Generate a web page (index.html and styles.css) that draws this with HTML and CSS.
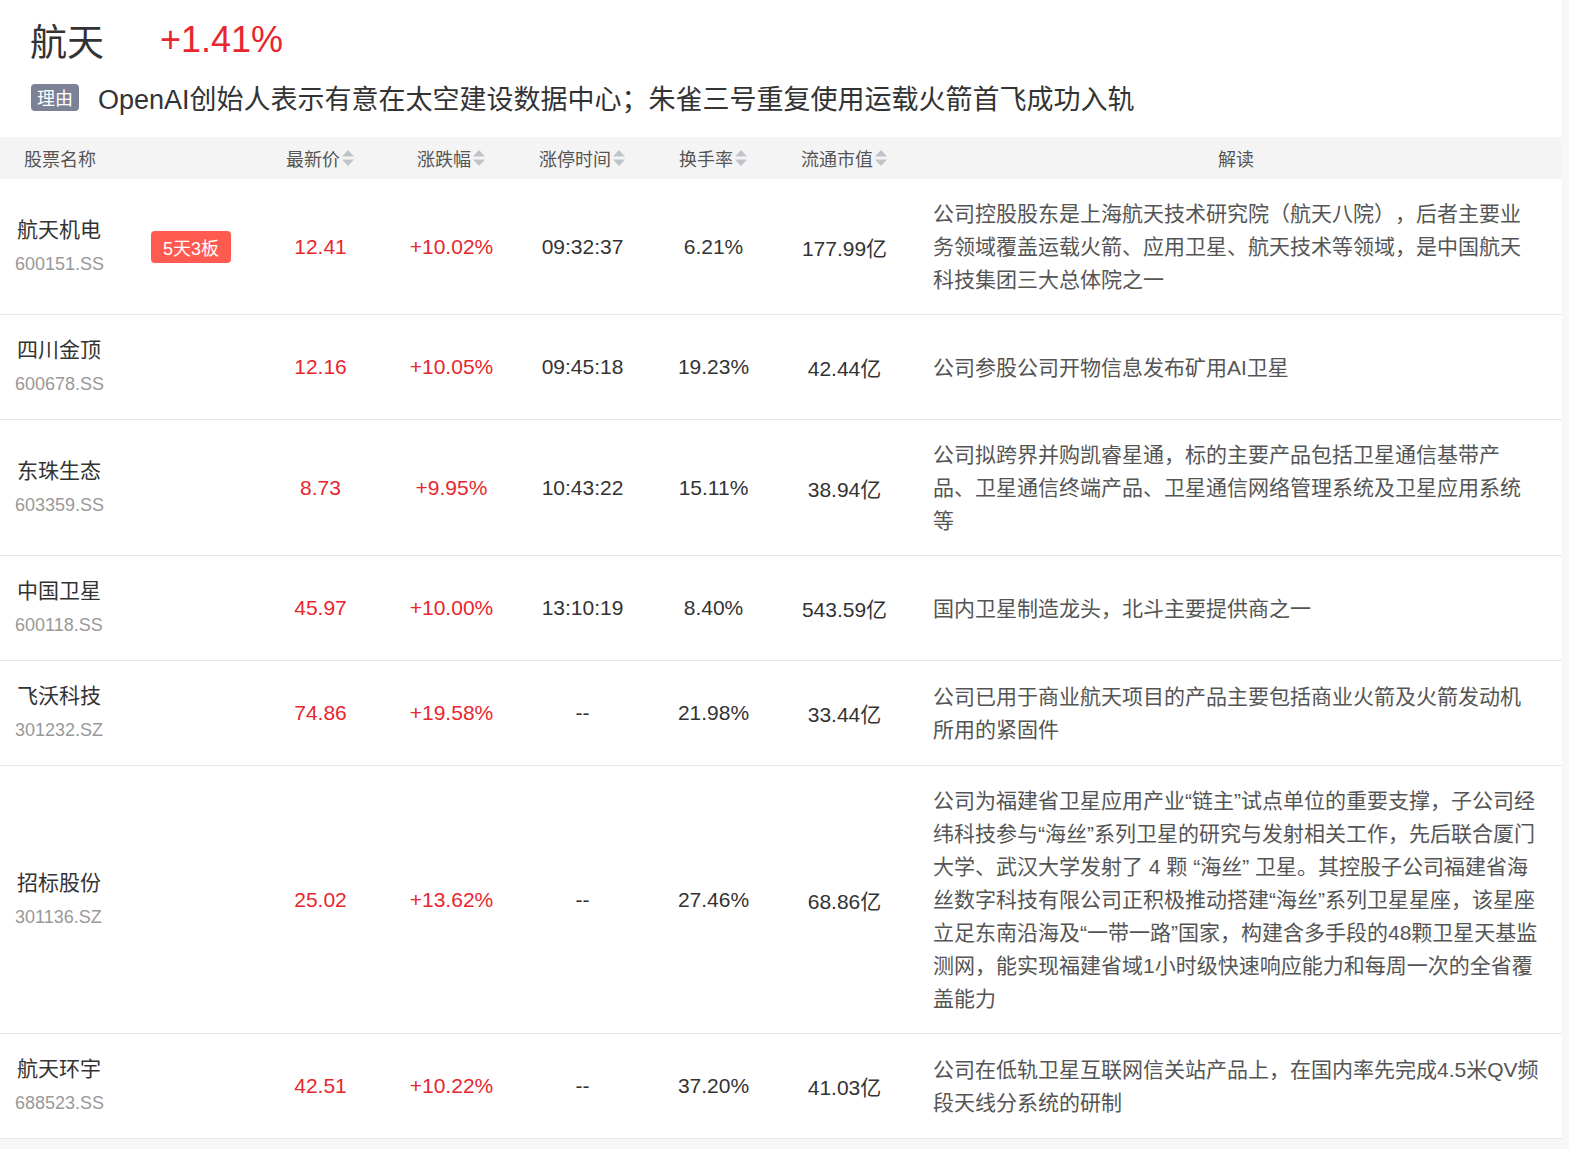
FILE: index.html
```html
<!DOCTYPE html>
<html lang="zh-CN">
<head>
<meta charset="utf-8">
<title>航天</title>
<link rel="stylesheet" href="styles.css">
</head>
<body>
<div class="page">
  <div class="top">
    <div class="title-line">
      <span class="title">航天</span>
      <span class="pct">+1.41%</span>
    </div>
    <div class="reason">
      <span class="reason-tag">理由</span>
      <span class="reason-text">OpenAI创始人表示有意在太空建设数据中心；朱雀三号重复使用运载火箭首飞成功入轨</span>
    </div>
  </div>

  <div class="table">
    <div class="row head">
      <div class="hcell left">股票名称</div>
      <div class="hcell">最新价<svg class="sort" viewBox="0 0 14 20" width="14" height="20"><path d="M7 2L13 8.5H1Z"/><path d="M1 11.5H13L7 18Z"/></svg></div>
      <div class="hcell">涨跌幅<svg class="sort" viewBox="0 0 14 20" width="14" height="20"><path d="M7 2L13 8.5H1Z"/><path d="M1 11.5H13L7 18Z"/></svg></div>
      <div class="hcell">涨停时间<svg class="sort" viewBox="0 0 14 20" width="14" height="20"><path d="M7 2L13 8.5H1Z"/><path d="M1 11.5H13L7 18Z"/></svg></div>
      <div class="hcell">换手率<svg class="sort" viewBox="0 0 14 20" width="14" height="20"><path d="M7 2L13 8.5H1Z"/><path d="M1 11.5H13L7 18Z"/></svg></div>
      <div class="hcell">流通市值<svg class="sort" viewBox="0 0 14 20" width="14" height="20"><path d="M7 2L13 8.5H1Z"/><path d="M1 11.5H13L7 18Z"/></svg></div>
      <div class="hcell">解读</div>
    </div>

    <div class="row">
      <div class="name-cell">
        <div class="stock"><div class="sname">航天机电</div><div class="scode">600151.SS</div></div>
        <span class="board">5天3板</span>
      </div>
      <div class="cell red">12.41</div>
      <div class="cell red">+10.02%</div>
      <div class="cell">09:32:37</div>
      <div class="cell">6.21%</div>
      <div class="cell">177.99亿</div>
      <div class="desc">公司控股股东是上海航天技术研究院（航天八院），后者主要业务领域覆盖运载火箭、应用卫星、航天技术等领域，是中国航天科技集团三大总体院之一</div>
    </div>

    <div class="row">
      <div class="name-cell">
        <div class="stock"><div class="sname">四川金顶</div><div class="scode">600678.SS</div></div>
      </div>
      <div class="cell red">12.16</div>
      <div class="cell red">+10.05%</div>
      <div class="cell">09:45:18</div>
      <div class="cell">19.23%</div>
      <div class="cell">42.44亿</div>
      <div class="desc">公司参股公司开物信息发布矿用AI卫星</div>
    </div>

    <div class="row">
      <div class="name-cell">
        <div class="stock"><div class="sname">东珠生态</div><div class="scode">603359.SS</div></div>
      </div>
      <div class="cell red">8.73</div>
      <div class="cell red">+9.95%</div>
      <div class="cell">10:43:22</div>
      <div class="cell">15.11%</div>
      <div class="cell">38.94亿</div>
      <div class="desc">公司拟跨界并购凯睿星通，标的主要产品包括卫星通信基带产品、卫星通信终端产品、卫星通信网络管理系统及卫星应用系统等</div>
    </div>

    <div class="row">
      <div class="name-cell">
        <div class="stock"><div class="sname">中国卫星</div><div class="scode">600118.SS</div></div>
      </div>
      <div class="cell red">45.97</div>
      <div class="cell red">+10.00%</div>
      <div class="cell">13:10:19</div>
      <div class="cell">8.40%</div>
      <div class="cell">543.59亿</div>
      <div class="desc">国内卫星制造龙头，北斗主要提供商之一</div>
    </div>

    <div class="row">
      <div class="name-cell">
        <div class="stock"><div class="sname">飞沃科技</div><div class="scode">301232.SZ</div></div>
      </div>
      <div class="cell red">74.86</div>
      <div class="cell red">+19.58%</div>
      <div class="cell">--</div>
      <div class="cell">21.98%</div>
      <div class="cell">33.44亿</div>
      <div class="desc">公司已用于商业航天项目的产品主要包括商业火箭及火箭发动机所用的紧固件</div>
    </div>

    <div class="row">
      <div class="name-cell">
        <div class="stock"><div class="sname">招标股份</div><div class="scode">301136.SZ</div></div>
      </div>
      <div class="cell red">25.02</div>
      <div class="cell red">+13.62%</div>
      <div class="cell">--</div>
      <div class="cell">27.46%</div>
      <div class="cell">68.86亿</div>
      <div class="desc">公司为福建省卫星应用产业“链主”试点单位的重要支撑，子公司经纬科技参与“海丝”系列卫星的研究与发射相关工作，先后联合厦门大学、武汉大学发射了 4 颗 “海丝” 卫星。其控股子公司福建省海丝数字科技有限公司正积极推动搭建“海丝”系列卫星星座，该星座立足东南沿海及“一带一路”国家，构建含多手段的48颗卫星天基监测网，能实现福建省域1小时级快速响应能力和每周一次的全省覆盖能力</div>
    </div>

    <div class="row">
      <div class="name-cell">
        <div class="stock"><div class="sname">航天环宇</div><div class="scode">688523.SS</div></div>
      </div>
      <div class="cell red">42.51</div>
      <div class="cell red">+10.22%</div>
      <div class="cell">--</div>
      <div class="cell">37.20%</div>
      <div class="cell">41.03亿</div>
      <div class="desc">公司在低轨卫星互联网信关站产品上，在国内率先完成4.5米QV频段天线分系统的研制</div>
    </div>
  </div>
</div>
</body>
</html>
```

FILE: styles.css
```css
html, body {
  margin: 0;
  padding: 0;
}
body {
  background: #f6f7f9;
  font-family: "Liberation Sans", "Noto Sans CJK SC", Arial, sans-serif;
  color: #333;
  text-spacing-trim: space-all;
}
.page {
  width: 1562px;
  background: #fff;
}
.top {
  padding: 18px 0 22px 30px;
}
.title-line {
  display: flex;
  align-items: center;
  height: 44px;
}
.title {
  font-size: 37px;
  color: #333;
}
.pct {
  font-size: 36px;
  color: #e8262d;
  margin-left: 56px;
}
.reason {
  display: flex;
  align-items: center;
  height: 36px;
  margin-top: 17px;
}
.reason-tag {
  display: inline-flex;
  align-items: center;
  justify-content: center;
  width: 48px;
  height: 27px;
  margin-left: 1px;
  border-radius: 4px;
  background: #7b8295;
  color: #fff;
  font-size: 18px;
}
.reason-text {
  margin-left: 19px;
  font-size: 27px;
  color: #333;
}
.row {
  display: grid;
  grid-template-columns: 255px repeat(5, 131px) 1fr;
  align-items: center;
  border-bottom: 1px solid #e8e8e8;
  min-height: 104px;
}
.row.head {
  min-height: 42px;
  height: 42px;
  background: #f4f4f4;
  border-bottom: none;
}
.hcell {
  display: flex;
  align-items: center;
  justify-content: center;
  font-size: 18px;
  color: #555;
}
.hcell.left {
  justify-content: flex-start;
  padding-left: 24px;
}
.sort {
  margin-left: 1px;
  fill: #bfc3ca;
}
.name-cell {
  display: flex;
  align-items: center;
  padding: 18px 0 18px 15px;
}
.stock {
  width: 136px;
}
.sname {
  font-size: 21px;
  line-height: 34px;
  color: #333;
  padding-left: 2px;
}
.scode {
  font-size: 18px;
  line-height: 34px;
  color: #999;
}
.board {
  display: inline-flex;
  align-items: center;
  justify-content: center;
  width: 80px;
  height: 32px;
  border-radius: 4px;
  background: #ff5a4f;
  color: #fff;
  font-size: 18px;
}
.cell {
  text-align: center;
  font-size: 21px;
  color: #333;
}
.cell.red {
  color: #e8262d;
}
.desc {
  padding: 18px 22px 18px 23px;
  font-size: 21px;
  line-height: 33px;
  color: #555;
}
```
